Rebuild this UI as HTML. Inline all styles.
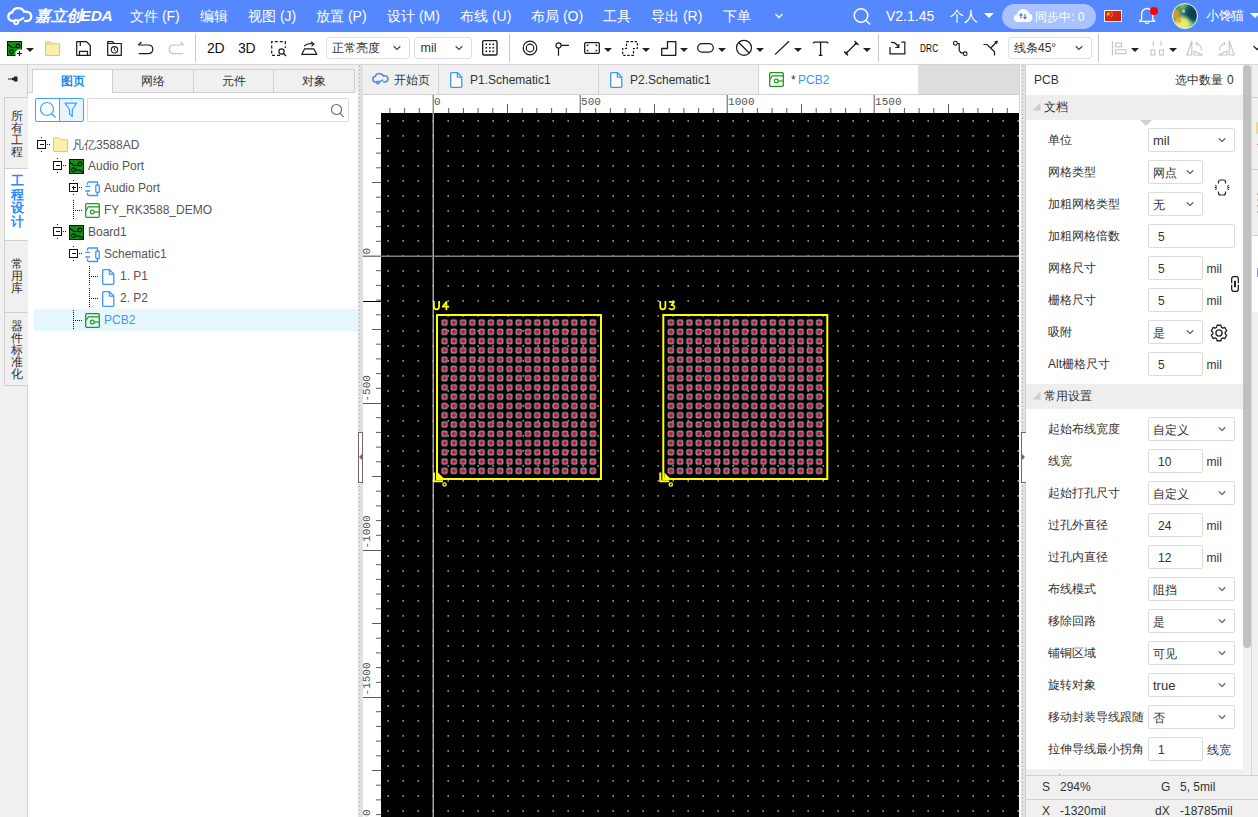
<!DOCTYPE html><html lang="zh"><head><meta charset="utf-8"><title>EDA</title><style>
*{box-sizing:border-box}
html,body{margin:0;padding:0;overflow:hidden}
html{width:1258px;height:817px}
body{width:1258px;height:817px;position:relative;overflow:hidden;background:#fff;font-family:"Liberation Sans",sans-serif;font-size:12px;color:#333}
.a{position:absolute}
i{display:inline-block;width:1em;text-align:center;font-style:inherit;overflow:visible;white-space:nowrap}
.t{position:absolute;white-space:nowrap;line-height:1}
svg{position:absolute;overflow:visible}
#top{left:0;top:0;width:1258px;height:32px;background:#5588ff}
#top .t{color:#fff;font-size:14px;top:9px}
#tb{left:0;top:32px;width:1258px;height:32px;background:#fff}
.sep{position:absolute;top:34px;width:1px;height:28px;background:#c8c8c8}
.dd{position:absolute;top:37px;height:22px;border:1px solid #dcdfe6;border-radius:3px;background:#fff}
.dd .t{font-size:13px;top:4px;color:#333}
.arr{position:absolute;width:0;height:0;border-left:4px solid transparent;border-right:4px solid transparent;border-top:4px solid #222;top:48px}
.row .t{font-size:12px;color:#333}
.inp{position:absolute;height:24px;border:1px solid #dcdcdc;border-radius:2px;background:#fff}
.inp .t{font-size:13px;top:5px;color:#333}
.lbl{position:absolute;white-space:nowrap;line-height:1;font-size:12px;color:#333;left:1048px}
.unit{position:absolute;white-space:nowrap;line-height:1;font-size:13px;color:#333}
.tr{position:absolute;white-space:nowrap;line-height:1;font-size:12px;color:#444}
.vt{position:absolute;left:4px;width:24px;border:1px solid #d0d0d0;border-right:none;background:#f0f0f0;font-size:12px;line-height:12px;text-align:center;color:#333}
.vt span{display:block;width:12px;margin:0 auto;word-break:break-all}
</style></head><body>
<div id="top" class="a">
<svg style="left:6.500px;top:6.500px" width="27.500" height="19" viewBox="0 0 26 18"><path d="M7.5 13.2H5.6C3 13.2 1.2 11.4 1.2 9.2c0-2 1.5-3.7 3.6-4C5.6 2.7 7.9 1 10.6 1c2.5 0 4.600 1.400 5.600 3.500 0.500-0.100 1-0.200 1.500-0.200 3 0 5.300 2.100 5.300 4.700 0 2.500-2.100 4.400-4.800 4.400h-1.200" fill="none" stroke="#fff" stroke-width="2.2" stroke-linecap="round"/><path d="M10 13.500 L15.500 10.500" stroke="#fff" stroke-width="2" stroke-linecap="round"/><circle cx="8.600" cy="14.200" r="2" fill="none" stroke="#fff" stroke-width="1.800"/></svg>
<div class="t" style="left:35px;top:8px;font-size:15.500px;font-weight:bold;font-style:italic;letter-spacing:-0.3px"><i>嘉</i><i>立</i><i>创</i></div>
<div class="t" style="left:80.600px;top:8px;font-size:15.500px;font-weight:bold;font-style:italic;letter-spacing:-0.3px">EDA</div>
<div class="t" style="left:130px"><i>文</i><i>件</i> (F)</div>
<div class="t" style="left:200px"><i>编</i><i>辑</i></div>
<div class="t" style="left:248px"><i>视</i><i>图</i> (J)</div>
<div class="t" style="left:316px"><i>放</i><i>置</i> (P)</div>
<div class="t" style="left:387px"><i>设</i><i>计</i> (M)</div>
<div class="t" style="left:460px"><i>布</i><i>线</i> (U)</div>
<div class="t" style="left:531px"><i>布</i><i>局</i> (O)</div>
<div class="t" style="left:603px"><i>工</i><i>具</i></div>
<div class="t" style="left:651px"><i>导</i><i>出</i> (R)</div>
<div class="t" style="left:723px"><i>下</i><i>单</i></div>
<svg style="left:774px;top:12px" width="10" height="8" viewBox="0 0 10 8"><path d="M1.500 2 L5 5.500 L8.500 2" fill="none" stroke="#fff" stroke-width="1.300"/></svg>
<svg style="left:852px;top:6px" width="20" height="20" viewBox="0 0 20 20"><circle cx="9" cy="9.500" r="6.800" fill="none" stroke="#fff" stroke-width="1.500"/><path d="M14 14.500 L17.800 18" stroke="#fff" stroke-width="1.500" stroke-linecap="round"/></svg>
<div class="t" style="left:886px">V2.1.45</div>
<div class="t" style="left:950px"><i>个</i><i>人</i></div>
<div class="a" style="left:984px;top:13px;width:0;height:0;border-left:5px solid transparent;border-right:5px solid transparent;border-top:5px solid #fff"></div>
<div class="a" style="left:1002px;top:4px;width:94px;height:25px;border-radius:13px;background:#a9c3ff"></div>
<svg style="left:1013px;top:8px" width="20" height="15" viewBox="0 0 20 15"><path d="M5 14C2.500 14 0.800 12.300 0.800 10.200 0.800 8.300 2.200 6.800 4 6.500 4.500 3.500 7 1 10.200 1c2.800 0 5 1.700 5.800 4.200 2 0.300 3.400 2 3.400 4.200 0 2.500-2 4.600-4.500 4.600z" fill="#fff"/><path d="M8 10.500V6M6.500 7.500L8 5.800 9.500 7.500M12 6v4.500M10.500 9L12 10.700 13.500 9" stroke="#3b6fe0" stroke-width="1.100" fill="none"/></svg>
<div class="t" style="left:1035px;top:11px;font-size:12px"><i>同</i><i>步</i><i>中</i>: 0</div>
<div class="a" style="left:1104px;top:10px;width:18px;height:12px;background:linear-gradient(135deg,#e0301a,#c81d10);border:1px solid #f4efe6"></div>
<svg style="left:1105px;top:11px" width="16" height="10" viewBox="0 0 16 10"><path d="M3.30 1.00L3.83 2.47L5.39 2.52L4.16 3.48L4.59 4.98L3.30 4.10L2.01 4.98L2.44 3.48L1.21 2.52L2.77 2.47z" fill="#ffde00"/><circle cx="6.300" cy="1.200" r="0.500" fill="#ffde00"/><circle cx="7.300" cy="2.600" r="0.500" fill="#ffde00"/><circle cx="7.300" cy="4.300" r="0.500" fill="#ffde00"/><circle cx="6.300" cy="5.600" r="0.500" fill="#ffde00"/></svg>
<svg style="left:1138px;top:7px" width="19" height="19" viewBox="0 0 19 19"><path d="M1.500 14.300L3.600 12.300V7Q3.600 2.300 9 1.300Q14.700 2.300 14.700 7V12.300L16.800 14.300z" fill="none" stroke="#fff" stroke-width="1.300" stroke-linejoin="round"/><path d="M7.200 14.800Q7.200 16.600 9 16.600Q10.800 16.600 10.800 14.800" fill="none" stroke="#fff" stroke-width="1.200"/></svg>
<div class="a" style="left:1150px;top:7px;width:8px;height:8px;border-radius:4px;background:#f00"></div>
<div class="a" style="left:1172px;top:3px;width:26px;height:26px;border-radius:13px;border:1px solid #f2f6ff;background:radial-gradient(circle at 44% 30%,#b9c9cf 0,#b9c9cf 4%,rgba(185,201,207,0) 10%),radial-gradient(circle at 24% 68%,#f2a93a 0,#f2a93a 6%,rgba(242,169,58,0) 14%),radial-gradient(circle at 8% 42%,#c9a02e 0,#c9a02e 12%,rgba(201,160,46,0) 30%),radial-gradient(circle at 38% 88%,#e9ec6c 0,#e4e866 22%,rgba(228,232,102,0) 42%),radial-gradient(circle at 86% 38%,#0b3b4c 0,#0e4857 22%,rgba(14,72,87,0) 42%),radial-gradient(circle at 78% 82%,#5cb392 0,rgba(92,179,146,0) 32%),radial-gradient(circle at 38% 6%,#a3bd3c 0,rgba(163,189,60,0) 24%),#1f8577"></div>
<div class="t" style="left:1206px;top:10px;font-size:12.500px"><i>小</i><i>馋</i><i>猫</i></div>
<div class="a" style="left:1250px;top:13px;width:0;height:0;border-left:5px solid transparent;border-right:5px solid transparent;border-top:5px solid #fff"></div>
</div>
<div id="tb" class="a"></div>
<div class="a" style="left:0;top:64px;width:1258px;height:1px;background:#d6d6d6"></div>
<svg style="left:7px;top:41px" width="16" height="16" viewBox="0 0 16 16"><rect x="0.5" y="0.5" width="14" height="14" fill="#0f8f10" stroke="#111" stroke-width="1"/><path d="M1 3.500 L5 6.500 H9" fill="none" stroke="#111" stroke-width="1.100"/><circle cx="11" cy="5" r="1.900" fill="none" stroke="#111" stroke-width="1.100"/><circle cx="4.500" cy="10.800" r="1.900" fill="none" stroke="#111" stroke-width="1.100"/><path d="M8.500 15 V11 L11 8.500 H15 V15z" fill="#fff"/><path d="M10 12.500h5M12.500 10v5" stroke="#111" stroke-width="1.200"/></svg>
<div class="arr" style="left:26px"></div>
<svg style="left:45px;top:41px" width="16" height="16" viewBox="0 0 16 16"><path d="M0.600 14.400V0.800H5.500L7.500 2.800H14.600V14.400z" fill="#fbf0a9" stroke="#dcc565" stroke-width="1"/><path d="M7.500 2.800H0.800" stroke="#dcc565" stroke-width="0.800" fill="none"/></svg>
<svg style="left:76px;top:41px" width="16" height="16" viewBox="0 0 16 16"><path d="M0.700 14.300V0.700H10.500L14.300 4.500V14.300z" fill="none" stroke="#1a1a1a" stroke-width="1.200" stroke-linejoin="round"/><path d="M3.500 14V10.300H11.500V14" fill="none" stroke="#1a1a1a" stroke-width="1.200"/><path d="M4.300 1V5" stroke="#1a1a1a" stroke-width="1.200"/></svg>
<svg style="left:107px;top:41px" width="16" height="16" viewBox="0 0 16 16"><path d="M0.700 14.300V0.700H5.500L7 2.500H14.300V14.300z" fill="none" stroke="#1a1a1a" stroke-width="1.200" stroke-linejoin="round"/><path d="M7 2.500 H1" stroke="#1a1a1a" stroke-width="0.900"/><circle cx="7.500" cy="8.800" r="3.200" fill="none" stroke="#1a1a1a" stroke-width="1.100"/><path d="M7.500 6.800V8.800L9 10.300" fill="none" stroke="#1a1a1a" stroke-width="1"/></svg>
<svg style="left:137px;top:40px" width="18" height="16" viewBox="0 0 18 16"><path d="M1.500 5 H11 C14.200 5 15.800 7 15.800 9.300 C15.800 11.600 14.200 13.700 11 13.700 H1.800" fill="none" stroke="#1a1a1a" stroke-width="1.200"/><path d="M4.500 2 L1.300 5" fill="none" stroke="#1a1a1a" stroke-width="1.200"/></svg>
<svg style="left:167px;top:40px" width="18" height="16" viewBox="0 0 18 16"><path d="M16.500 5 H7 C3.800 5 2.200 7 2.200 9.300 C2.200 11.600 3.800 13.700 7 13.700 H16.200" fill="none" stroke="#c4c4c4" stroke-width="1.200"/><path d="M13.500 2 L16.700 5" fill="none" stroke="#c4c4c4" stroke-width="1.200"/></svg>
<div class="sep" style="left:195px"></div>
<div class="t" style="left:207px;top:41px;font-size:14px;color:#111;letter-spacing:-0.3px">2D</div>
<div class="t" style="left:238px;top:41px;font-size:14px;color:#111;letter-spacing:-0.3px">3D</div>
<svg style="left:271px;top:41px" width="16" height="16" viewBox="0 0 16 16"><path d="M9 14.300H0.700V0.700H14.300V7" fill="none" stroke="#1a1a1a" stroke-width="1.200" stroke-dasharray="3 2"/><circle cx="10.500" cy="10.500" r="2.600" fill="none" stroke="#1a1a1a" stroke-width="1.200"/><path d="M12.500 12.500L15 15" stroke="#1a1a1a" stroke-width="1.200"/></svg>
<svg style="left:301px;top:41px" width="17" height="16" viewBox="0 0 17 16"><path d="M0.800 13.300L3.600 7.800H12.800L15.800 13.300z" fill="none" stroke="#1a1a1a" stroke-width="1.200" stroke-linejoin="round"/><path d="M3.200 5.200C5.500 2.800 9 2.200 12.500 3" fill="none" stroke="#1a1a1a" stroke-width="1.200"/><path d="M10 0.800L13 3L10.500 5.300" fill="none" stroke="#1a1a1a" stroke-width="1.100"/></svg>
<div class="dd" style="left:326px;width:84px"><div class="t" style="left:5px;top:4px;font-size:12px"><i>正</i><i>常</i><i>亮</i><i>度</i></div></div>
<svg style="left:392px;top:44px" width="10" height="8" viewBox="0 0 10 8"><path d="M1.700 2.300L5 5.400L8.300 2.300" fill="none" stroke="#444" stroke-width="1.200"/></svg>
<div class="dd" style="left:414px;width:58px"><div class="t" style="left:5.500px;top:4px;font-size:12.500px">mil</div></div>
<svg style="left:454px;top:44px" width="10" height="8" viewBox="0 0 10 8"><path d="M1.700 2.300L5 5.400L8.300 2.300" fill="none" stroke="#444" stroke-width="1.200"/></svg>
<svg style="left:482px;top:40px" width="16" height="16" viewBox="0 0 16 16"><rect x="0.700" y="0.700" width="14.300" height="14.300" rx="1" fill="none" stroke="#1a1a1a" stroke-width="1.300"/><rect x="3.5" y="3.5" width="1.600" height="1.600" fill="#1a1a1a"/><rect x="3.5" y="7" width="1.600" height="1.600" fill="#1a1a1a"/><rect x="3.5" y="10.5" width="1.600" height="1.600" fill="#1a1a1a"/><rect x="7" y="3.5" width="1.600" height="1.600" fill="#1a1a1a"/><rect x="7" y="7" width="1.600" height="1.600" fill="#1a1a1a"/><rect x="7" y="10.5" width="1.600" height="1.600" fill="#1a1a1a"/><rect x="10.5" y="3.5" width="1.600" height="1.600" fill="#1a1a1a"/><rect x="10.5" y="7" width="1.600" height="1.600" fill="#1a1a1a"/><rect x="10.5" y="10.5" width="1.600" height="1.600" fill="#1a1a1a"/></svg>
<div class="sep" style="left:509px"></div>
<svg style="left:522px;top:40px" width="16" height="16" viewBox="0 0 16 16"><circle cx="8" cy="8" r="6.800" fill="none" stroke="#1a1a1a" stroke-width="1.200"/><circle cx="8" cy="8" r="3.800" fill="none" stroke="#1a1a1a" stroke-width="1.200"/></svg>
<svg style="left:554px;top:41px" width="16" height="16" viewBox="0 0 16 16"><circle cx="4.500" cy="4.400" r="2.600" fill="none" stroke="#1a1a1a" stroke-width="1.200"/><path d="M7.200 4.400H15M4.500 7V14.800" stroke="#1a1a1a" stroke-width="1.200"/></svg>
<svg style="left:584px;top:42px" width="16" height="12" viewBox="0 0 16 12"><rect x="0.700" y="0.700" width="14.600" height="10.600" rx="1" fill="none" stroke="#1a1a1a" stroke-width="1.300"/><rect x="2.800" y="2.500" width="1.600" height="1.600" fill="#1a1a1a"/><rect x="11.600" y="2.500" width="1.600" height="1.600" fill="#1a1a1a"/><rect x="2.800" y="7.800" width="1.600" height="1.600" fill="#1a1a1a"/><rect x="11.600" y="7.800" width="1.600" height="1.600" fill="#1a1a1a"/></svg>
<div class="arr" style="left:604px"></div>
<svg style="left:622px;top:41px" width="17" height="15" viewBox="0 0 17 15"><path d="M4.500 0.700H15.300V7.500H11.500V14.300H0.700V7.500H4.500z" fill="none" stroke="#1a1a1a" stroke-width="1.200" stroke-dasharray="2.500 1.500"/></svg>
<div class="arr" style="left:642px"></div>
<svg style="left:661px;top:41px" width="16" height="15" viewBox="0 0 16 15"><path d="M6.500 0.700H14.800V14.300H0.700V7.500H6.500z" fill="none" stroke="#1a1a1a" stroke-width="1.300" stroke-linejoin="round"/></svg>
<div class="arr" style="left:680px"></div>
<svg style="left:697px;top:43px" width="18" height="10" viewBox="0 0 18 10"><rect x="0.700" y="0.700" width="15.600" height="8.400" rx="4.200" fill="none" stroke="#1a1a1a" stroke-width="1.200"/></svg>
<div class="arr" style="left:718px"></div>
<svg style="left:735px;top:39px" width="18" height="18" viewBox="0 0 18 18"><circle cx="9" cy="8.800" r="7.500" fill="none" stroke="#1a1a1a" stroke-width="1.200"/><path d="M3.800 3.500L14.200 14" stroke="#1a1a1a" stroke-width="1.200"/></svg>
<div class="arr" style="left:756px"></div>
<svg style="left:774px;top:40px" width="16" height="16" viewBox="0 0 16 16"><path d="M1 14.600L15 1.200" stroke="#1a1a1a" stroke-width="1.300"/></svg>
<div class="arr" style="left:794px"></div>
<svg style="left:813px;top:41px" width="16" height="16" viewBox="0 0 16 16"><path d="M0.500 1.200H14.700M7.600 1.200V14.300M5.800 14.300H9.400M0.500 1.200V2.500M14.700 1.200V2.500" stroke="#1a1a1a" stroke-width="1.300" fill="none"/></svg>
<svg style="left:843px;top:40px" width="18" height="17" viewBox="0 0 18 17"><path d="M2.500 14L14 2.500" stroke="#1a1a1a" stroke-width="1.300"/><path d="M1 11.500L5 15.500M11.500 1L15.500 5" stroke="#1a1a1a" stroke-width="1.200"/><path d="M2.500 14L3.200 11.200L5.300 13.300zM14 2.500L13.300 5.300L11.200 3.200z" fill="#1a1a1a"/></svg>
<div class="arr" style="left:863px"></div>
<div class="sep" style="left:878px"></div>
<svg style="left:889px;top:41px" width="18" height="14" viewBox="0 0 18 14"><path d="M1 6V12.800H15.800V1.200H12.500" fill="none" stroke="#1a1a1a" stroke-width="1.200"/><path d="M2 1.500C5.500 1.200 8 3 9.500 6.500" fill="none" stroke="#1a1a1a" stroke-width="1.200"/><path d="M6.300 6.500H9.800V3" fill="none" stroke="#1a1a1a" stroke-width="1.200"/></svg>
<div class="t" style="left:920px;top:43px;font-size:11.500px;color:#000;transform:scaleX(0.72);transform-origin:0 0;letter-spacing:0.2px">DRC</div>
<svg style="left:952px;top:40px" width="17" height="17" viewBox="0 0 17 17"><circle cx="3.400" cy="3.200" r="1.900" fill="none" stroke="#1a1a1a" stroke-width="1.100"/><circle cx="13.200" cy="13.800" r="1.900" fill="none" stroke="#1a1a1a" stroke-width="1.100"/><path d="M5.300 3.500H7.200V10.500L9 12.800H11.300" fill="none" stroke="#1a1a1a" stroke-width="1.200"/></svg>
<svg style="left:982px;top:39px" width="18" height="18" viewBox="0 0 18 18"><path d="M1.500 5.500H5L12.500 12.800V16.500" fill="none" stroke="#1a1a1a" stroke-width="1.200"/><path d="M8.800 9L15 2.500" fill="none" stroke="#1a1a1a" stroke-width="1.200"/><path d="M16 1.500L12.200 2.500L15 5.300z" fill="#1a1a1a"/></svg>
<div class="dd" style="left:1008px;width:84px"><div class="t" style="left:5px;top:4px;font-size:12px"><i>线</i><i>条</i>45°</div></div>
<svg style="left:1074px;top:44px" width="10" height="8" viewBox="0 0 10 8"><path d="M1.700 2.300L5 5.400L8.300 2.300" fill="none" stroke="#444" stroke-width="1.200"/></svg>
<div class="sep" style="left:1098px"></div>
<svg style="left:1111px;top:41px" width="17" height="15" viewBox="0 0 17 15"><path d="M1.500 0V14.500" stroke="#c4c4c4" stroke-width="1.200"/><rect x="4.500" y="2" width="6" height="3.800" fill="none" stroke="#c4c4c4" stroke-width="1.100"/><rect x="4.500" y="8.800" width="10.500" height="3.800" fill="none" stroke="#c4c4c4" stroke-width="1.100"/></svg>
<div class="arr" style="left:1131px"></div>
<svg style="left:1150px;top:41px" width="15" height="15" viewBox="0 0 15 15"><path d="M3.200 0V5M11 0V5" stroke="#c4c4c4" stroke-width="1.100"/><rect x="1" y="8.800" width="3.800" height="5.200" fill="none" stroke="#c4c4c4" stroke-width="1.100"/><rect x="9.500" y="8.800" width="3.800" height="5.200" fill="none" stroke="#c4c4c4" stroke-width="1.100"/></svg>
<div class="arr" style="left:1169px"></div>
<svg style="left:1186px;top:40px" width="18" height="16" viewBox="0 0 18 16"><path d="M5.800 1L0.800 15H5.800z" fill="none" stroke="#c4c4c4" stroke-width="1.100" stroke-linejoin="round"/><path d="M8 15H16.500L8 11z" fill="none" stroke="#c4c4c4" stroke-width="1.100" stroke-linejoin="round"/><path d="M15.500 10C15.500 6.500 13 4 10 3.500" fill="none" stroke="#c4c4c4" stroke-width="1.100"/><path d="M11.500 1.800L9.500 3.500L11.500 5.500" fill="none" stroke="#c4c4c4" stroke-width="1"/></svg>
<svg style="left:1217px;top:40px" width="18" height="16" viewBox="0 0 18 16"><path d="M12.200 1L17.200 15H12.200z" fill="none" stroke="#c4c4c4" stroke-width="1.100" stroke-linejoin="round"/><path d="M10 15H1.500L10 11z" fill="none" stroke="#c4c4c4" stroke-width="1.100" stroke-linejoin="round"/><path d="M2.500 10C2.500 6.500 5 4 8 3.500" fill="none" stroke="#c4c4c4" stroke-width="1.100"/><path d="M6.500 1.800L8.500 3.500L6.500 5.500" fill="none" stroke="#c4c4c4" stroke-width="1"/></svg>
<svg style="left:1252px;top:44px" width="10" height="8" viewBox="0 0 10 8"><path d="M1.500 2 L5 5.500 L8.500 2" fill="none" stroke="#222" stroke-width="1.300"/></svg>
<div class="a" style="left:0;top:65px;width:358px;height:752px;background:#f0f0f0"></div>
<div class="a" style="left:28px;top:92px;width:330px;height:725px;background:#fff"></div>
<div class="a" style="left:27px;top:65px;width:1px;height:752px;background:#d0d0d0"></div>
<svg style="left:8px;top:75px" width="11" height="8" viewBox="0 0 11 8"><path d="M0 4H4" stroke="#222" stroke-width="1"/><path d="M4 2.800H6V1.500H9.500V6.500H6V5.200H4z" fill="#222"/></svg>
<div class="vt" style="top:97px;height:72px;padding-top:12px;font-size:12px;line-height:12px;"><span><i>所</i></span><span><i>有</i></span><span><i>工</i></span><span><i>程</i></span></div>
<div class="vt" style="top:168px;height:73px;padding-top:5px;background:#fff;color:#2f8af5;font-weight:bold;width:24px;border-right:none;font-size:13px;line-height:13.5px;"><span><i>工</i></span><span><i>程</i></span><span><i>设</i></span><span><i>计</i></span></div>
<div class="vt" style="top:240px;height:73px;padding-top:17px;font-size:12px;line-height:12px;"><span><i>常</i></span><span><i>用</i></span><span><i>库</i></span></div>
<div class="vt" style="top:312px;height:74px;padding-top:7px;font-size:12px;line-height:12px;"><span><i>器</i></span><span><i>件</i></span><span><i>标</i></span><span><i>准</i></span><span><i>化</i></span></div>
<div class="a" style="left:27px;top:169px;width:1px;height:71px;background:#fff"></div>
<div class="a" style="left:32px;top:69px;width:81px;height:24px;background:#fff;border:1px solid #d0d0d0;border-bottom:none"></div>
<div class="t" style="left:32px;top:75px;width:81px;text-align:center;color:#1e88f5;font-size:12px;font-weight:bold"><i>图</i><i>页</i></div>
<div class="a" style="left:112px;top:69px;width:82px;height:24px;background:#f0f0f0;border:1px solid #d0d0d0"></div>
<div class="t" style="left:112px;top:75px;width:81px;text-align:center;color:#333;font-size:12px"><i>网</i><i>络</i></div>
<div class="a" style="left:193px;top:69px;width:82px;height:24px;background:#f0f0f0;border:1px solid #d0d0d0"></div>
<div class="t" style="left:193px;top:75px;width:81px;text-align:center;color:#333;font-size:12px"><i>元</i><i>件</i></div>
<div class="a" style="left:273px;top:69px;width:82px;height:24px;background:#f0f0f0;border:1px solid #d0d0d0"></div>
<div class="t" style="left:273px;top:75px;width:81px;text-align:center;color:#333;font-size:12px"><i>对</i><i>象</i></div>
<div class="a" style="left:28px;top:92px;width:5px;height:1px;background:#d0d0d0"></div>
<div class="a" style="left:35px;top:98px;width:25px;height:24px;border:1px solid #409eff;border-radius:2px 0 0 2px;background:#fff"></div>
<div class="a" style="left:59px;top:98px;width:25px;height:24px;border:1px solid #409eff;border-radius:0 2px 2px 0;background:#e6f5ff"></div>
<svg style="left:39px;top:101px" width="18" height="18" viewBox="0 0 18 18"><circle cx="8" cy="8" r="6.500" fill="none" stroke="#409eff" stroke-width="1.200"/><path d="M12.500 12.500L16.500 16.500" stroke="#409eff" stroke-width="1.200"/></svg>
<svg style="left:64px;top:102px" width="14" height="16" viewBox="0 0 14 16"><path d="M1 1.200H12.500L8.300 7.500V14.500L5.500 12V7.500z" fill="none" stroke="#409eff" stroke-width="1.200" stroke-linejoin="round"/></svg>
<div class="a" style="left:87px;top:98px;width:262px;height:24px;border:1px solid #dcdcdc;border-radius:2px;background:#fff"></div>
<svg style="left:330px;top:103px" width="15" height="15" viewBox="0 0 15 15"><circle cx="6.500" cy="6.500" r="5" fill="none" stroke="#666" stroke-width="1.100"/><path d="M10 10.200L13.500 13.800" stroke="#666" stroke-width="1.100"/></svg>
<div class="a" style="left:34px;top:309px;width:324px;height:22px;background:#e6f7ff"></div>
<svg style="left:36px;top:136px" width="16" height="18" viewBox="0 0 16 18" shape-rendering="crispEdges"><rect x="1.500" y="4.500" width="8" height="8" fill="#fff" stroke="#111" stroke-width="1"/><path d="M3.500 8.500H7.500" stroke="#111" stroke-width="1"/><rect x="5" y="1" width="1" height="1" fill="#111"/><rect x="5" y="15" width="1" height="1" fill="#111"/><rect x="11" y="8" width="1" height="1" fill="#111"/><rect x="13" y="8" width="1" height="1" fill="#111"/></svg>
<svg style="left:53px;top:137px" width="16" height="16" viewBox="0 0 16 16"><path d="M0.600 14.400V0.800H5.500L7.500 2.800H14.600V14.400z" fill="#fbf0a9" stroke="#dcc565" stroke-width="1"/></svg>
<div class="tr" style="left:72px;top:139px;color:#555"><i>凡</i><i>亿</i>3588AD</div>
<svg style="left:52px;top:157px" width="16" height="18" viewBox="0 0 16 18" shape-rendering="crispEdges"><rect x="1.500" y="4.500" width="8" height="8" fill="#fff" stroke="#111" stroke-width="1"/><path d="M3.500 8.500H7.500" stroke="#111" stroke-width="1"/><rect x="5" y="1" width="1" height="1" fill="#111"/><rect x="5" y="15" width="1" height="1" fill="#111"/><rect x="11" y="8" width="1" height="1" fill="#111"/><rect x="13" y="8" width="1" height="1" fill="#111"/></svg>
<svg style="left:69px;top:159px" width="16" height="16" viewBox="0 0 16 16"><rect x="0.500" y="0.500" width="14" height="14" fill="#0f8f10" stroke="#111" stroke-width="1"/><path d="M1 3.500L5 6.500H9" fill="none" stroke="#111" stroke-width="1.100"/><circle cx="11" cy="5" r="1.900" fill="none" stroke="#111" stroke-width="1.100"/><circle cx="4.500" cy="10.800" r="1.900" fill="none" stroke="#111" stroke-width="1.100"/><path d="M6.500 11H10.500L14.500 13.500" fill="none" stroke="#111" stroke-width="1.100"/></svg>
<div class="tr" style="left:88px;top:160px;color:#555">Audio Port</div>
<svg style="left:68px;top:179px" width="16" height="18" viewBox="0 0 16 18" shape-rendering="crispEdges"><rect x="1.500" y="4.500" width="8" height="8" fill="#fff" stroke="#111" stroke-width="1"/><path d="M3.500 8.500H7.500" stroke="#111" stroke-width="1"/><path d="M5.500 6.500V10.500" stroke="#111" stroke-width="1"/><rect x="5" y="1" width="1" height="1" fill="#111"/><rect x="5" y="15" width="1" height="1" fill="#111"/><rect x="11" y="8" width="1" height="1" fill="#111"/><rect x="13" y="8" width="1" height="1" fill="#111"/></svg>
<svg style="left:85px;top:181px" width="16" height="16" viewBox="0 0 16 16"><path d="M2.500 3.800V2.500C2.500 1.500 3 1 4 1H12.500V14.500H4C3 14.500 2.500 14 2.500 13V11.500" fill="none" stroke="#3d97f5" stroke-width="1.300" stroke-linejoin="round"/><rect x="10.800" y="4" width="3.500" height="7.500" rx="1" fill="#fff" stroke="#3d97f5" stroke-width="1.300"/><path d="M0.300 5.300H5M0.300 10H5" stroke="#3d97f5" stroke-width="1.300"/></svg>
<div class="tr" style="left:104px;top:182px;color:#555">Audio Port</div>
<svg style="left:73px;top:200px" width="12" height="20" viewBox="0 0 12 20" shape-rendering="crispEdges"><path d="M0.500 0V19" stroke="#111" stroke-width="1" stroke-dasharray="1 1"/><path d="M2 10.500H9" stroke="#111" stroke-width="1" stroke-dasharray="1 1"/></svg>
<svg style="left:85px;top:203px" width="16" height="16" viewBox="0 0 16 16"><rect x="0.700" y="0.700" width="13.600" height="13.600" rx="1" fill="none" stroke="#1a9c1a" stroke-width="1.300"/><path d="M1 7.500L3.300 3.800H14" fill="none" stroke="#1a9c1a" stroke-width="1.200"/><circle cx="7.300" cy="9" r="1.900" fill="none" stroke="#1a9c1a" stroke-width="1.200"/><path d="M9.200 9H14" stroke="#1a9c1a" stroke-width="1.200"/></svg>
<div class="tr" style="left:104px;top:204px;color:#555">FY_RK3588_DEMO</div>
<svg style="left:52px;top:223px" width="16" height="18" viewBox="0 0 16 18" shape-rendering="crispEdges"><rect x="1.500" y="4.500" width="8" height="8" fill="#fff" stroke="#111" stroke-width="1"/><path d="M3.500 8.500H7.500" stroke="#111" stroke-width="1"/><rect x="5" y="1" width="1" height="1" fill="#111"/><rect x="5" y="15" width="1" height="1" fill="#111"/><rect x="11" y="8" width="1" height="1" fill="#111"/><rect x="13" y="8" width="1" height="1" fill="#111"/></svg>
<svg style="left:69px;top:225px" width="16" height="16" viewBox="0 0 16 16"><rect x="0.500" y="0.500" width="14" height="14" fill="#0f8f10" stroke="#111" stroke-width="1"/><path d="M1 3.500L5 6.500H9" fill="none" stroke="#111" stroke-width="1.100"/><circle cx="11" cy="5" r="1.900" fill="none" stroke="#111" stroke-width="1.100"/><circle cx="4.500" cy="10.800" r="1.900" fill="none" stroke="#111" stroke-width="1.100"/><path d="M6.500 11H10.500L14.500 13.500" fill="none" stroke="#111" stroke-width="1.100"/></svg>
<div class="tr" style="left:88px;top:226px;color:#555">Board1</div>
<svg style="left:68px;top:245px" width="16" height="18" viewBox="0 0 16 18" shape-rendering="crispEdges"><rect x="1.500" y="4.500" width="8" height="8" fill="#fff" stroke="#111" stroke-width="1"/><path d="M3.500 8.500H7.500" stroke="#111" stroke-width="1"/><rect x="5" y="1" width="1" height="1" fill="#111"/><rect x="5" y="15" width="1" height="1" fill="#111"/><rect x="11" y="8" width="1" height="1" fill="#111"/><rect x="13" y="8" width="1" height="1" fill="#111"/></svg>
<svg style="left:85px;top:247px" width="16" height="16" viewBox="0 0 16 16"><path d="M2.500 3.800V2.500C2.500 1.500 3 1 4 1H12.500V14.500H4C3 14.500 2.500 14 2.500 13V11.500" fill="none" stroke="#3d97f5" stroke-width="1.300" stroke-linejoin="round"/><rect x="10.800" y="4" width="3.500" height="7.500" rx="1" fill="#fff" stroke="#3d97f5" stroke-width="1.300"/><path d="M0.300 5.300H5M0.300 10H5" stroke="#3d97f5" stroke-width="1.300"/></svg>
<div class="tr" style="left:104px;top:248px;color:#555">Schematic1</div>
<svg style="left:89px;top:266px" width="12" height="20" viewBox="0 0 12 20" shape-rendering="crispEdges"><path d="M0.500 0V19" stroke="#111" stroke-width="1" stroke-dasharray="1 1"/><path d="M2 10.500H9" stroke="#111" stroke-width="1" stroke-dasharray="1 1"/></svg>
<svg style="left:102px;top:269px" width="13" height="16" viewBox="0 0 13 16"><path d="M0.700 14.500V2C0.700 1.200 1.200 0.700 2 0.700H7.500L11.800 5V14.500C11.800 15 11.500 15.300 11 15.300H1.500C1 15.300 0.700 15 0.700 14.500z" fill="#fff" stroke="#3d97f5" stroke-width="1.300" stroke-linejoin="round"/><path d="M7.300 0.700V5.200H11.800" fill="none" stroke="#3d97f5" stroke-width="1.200"/></svg>
<div class="tr" style="left:120px;top:270px;color:#555">1. P1</div>
<svg style="left:89px;top:288px" width="12" height="20" viewBox="0 0 12 20" shape-rendering="crispEdges"><path d="M0.500 0V19" stroke="#111" stroke-width="1" stroke-dasharray="1 1"/><path d="M2 10.500H9" stroke="#111" stroke-width="1" stroke-dasharray="1 1"/></svg>
<svg style="left:102px;top:291px" width="13" height="16" viewBox="0 0 13 16"><path d="M0.700 14.500V2C0.700 1.200 1.200 0.700 2 0.700H7.500L11.800 5V14.500C11.800 15 11.500 15.300 11 15.300H1.500C1 15.300 0.700 15 0.700 14.500z" fill="#fff" stroke="#3d97f5" stroke-width="1.300" stroke-linejoin="round"/><path d="M7.300 0.700V5.200H11.800" fill="none" stroke="#3d97f5" stroke-width="1.200"/></svg>
<div class="tr" style="left:120px;top:292px;color:#555">2. P2</div>
<svg style="left:73px;top:310px" width="12" height="20" viewBox="0 0 12 20" shape-rendering="crispEdges"><path d="M0.500 0V19" stroke="#111" stroke-width="1" stroke-dasharray="1 1"/><path d="M2 10.500H9" stroke="#111" stroke-width="1" stroke-dasharray="1 1"/></svg>
<svg style="left:85px;top:313px" width="16" height="16" viewBox="0 0 16 16"><rect x="0.700" y="0.700" width="13.600" height="13.600" rx="1" fill="none" stroke="#1a9c1a" stroke-width="1.300"/><path d="M1 7.500L3.300 3.800H14" fill="none" stroke="#1a9c1a" stroke-width="1.200"/><circle cx="7.300" cy="9" r="1.900" fill="none" stroke="#1a9c1a" stroke-width="1.200"/><path d="M9.200 9H14" stroke="#1a9c1a" stroke-width="1.200"/></svg>
<div class="tr" style="left:104px;top:314px;color:#3d97f5">PCB2</div>
<div class="a" style="left:358px;top:65px;width:5px;height:752px;background:#e0e0e0"></div>
<div class="a" style="left:359px;top:66px;width:1px;height:751px;background:repeating-linear-gradient(180deg,#9c9c9c 0,#9c9c9c 1px,#fff 1px,#fff 2px,rgba(0,0,0,0) 2px,rgba(0,0,0,0) 4px)"></div>
<div class="a" style="left:358px;top:432px;width:5px;height:51px;border:1px solid #7a6464;background:#fff"></div>
<div class="a" style="left:359px;top:454px;width:0;height:0;border-top:3px solid transparent;border-bottom:3px solid transparent;border-right:3px solid #7a6464"></div>
<div class="a" style="left:363px;top:65px;width:656px;height:29px;background:#f0f0f0"></div>
<div class="a" style="left:918px;top:65px;width:101px;height:29px;background:#dddddd"></div>
<div class="a" style="left:758px;top:65px;width:160px;height:29px;background:#fff"></div>
<div class="a" style="left:363px;top:94px;width:656px;height:1px;background:#d0d0d0"></div>
<div class="a" style="left:438px;top:65px;width:1px;height:29px;background:#d4d4d4"></div>
<div class="a" style="left:598px;top:65px;width:1px;height:29px;background:#d4d4d4"></div>
<div class="a" style="left:758px;top:65px;width:1px;height:29px;background:#d4d4d4"></div>
<svg style="left:372px;top:72px" width="18" height="14" viewBox="0 0 26 18"><path d="M7.500 13.200H5.600C3 13.200 1.200 11.400 1.200 9.200c0-2 1.500-3.700 3.600-4C5.600 2.700 7.900 1 10.600 1c2.500 0 4.600 1.400 5.600 3.500 0.500-0.100 1-0.200 1.500-0.200 3 0 5.300 2.100 5.300 4.700 0 2.500-2.100 4.400-4.800 4.400h-1.200" fill="none" stroke="#4a86f5" stroke-width="2.200" stroke-linecap="round"/><path d="M10 13.500L15.500 10.500" stroke="#4a86f5" stroke-width="2" stroke-linecap="round"/><circle cx="8.600" cy="14.200" r="2" fill="none" stroke="#4a86f5" stroke-width="1.800"/></svg>
<div class="t" style="left:394px;top:74px;font-size:12px;color:#333"><i>开</i><i>始</i><i>页</i></div>
<svg style="left:450px;top:72px" width="13" height="16" viewBox="0 0 13 16"><path d="M0.700 14.500V2C0.700 1.200 1.200 0.700 2 0.700H7.500L11.800 5V14.500C11.800 15 11.500 15.300 11 15.300H1.500C1 15.300 0.700 15 0.700 14.500z" fill="#fff" stroke="#3d97f5" stroke-width="1.300" stroke-linejoin="round"/><path d="M7.300 0.700V5.200H11.800" fill="none" stroke="#3d97f5" stroke-width="1.200"/></svg>
<div class="t" style="left:470px;top:74px;font-size:12px;color:#333">P1.Schematic1</div>
<svg style="left:610px;top:72px" width="13" height="16" viewBox="0 0 13 16"><path d="M0.700 14.500V2C0.700 1.200 1.200 0.700 2 0.700H7.500L11.800 5V14.500C11.800 15 11.500 15.300 11 15.300H1.500C1 15.300 0.700 15 0.700 14.500z" fill="#fff" stroke="#3d97f5" stroke-width="1.300" stroke-linejoin="round"/><path d="M7.300 0.700V5.200H11.800" fill="none" stroke="#3d97f5" stroke-width="1.200"/></svg>
<div class="t" style="left:630px;top:74px;font-size:12px;color:#333">P2.Schematic1</div>
<svg style="left:769px;top:72px" width="16" height="16" viewBox="0 0 16 16"><rect x="0.700" y="0.700" width="13.600" height="13.600" rx="1" fill="none" stroke="#1a9c1a" stroke-width="1.300"/><path d="M1 7.500L3.300 3.800H14" fill="none" stroke="#1a9c1a" stroke-width="1.200"/><circle cx="7.300" cy="9" r="1.900" fill="none" stroke="#1a9c1a" stroke-width="1.200"/><path d="M9.200 9H14" stroke="#1a9c1a" stroke-width="1.200"/></svg>
<div class="t" style="left:791px;top:74px;font-size:12px;color:#333">*</div>
<div class="t" style="left:798px;top:74px;font-size:12px;color:#3d97f5">PCB2</div>
<svg style="left:363px;top:95px" width="656" height="722" viewBox="363 95 656 722"><defs><pattern id="gd" patternUnits="userSpaceOnUse" x="431" y="119" width="15" height="15"><rect x="1" y="1" width="1" height="1" fill="#545454"/><rect x="2" y="1" width="1" height="1" fill="#909090"/><rect x="1" y="2" width="1" height="1" fill="#424242"/><rect x="2" y="2" width="1" height="1" fill="#707070"/></pattern><pattern id="pd" patternUnits="userSpaceOnUse" x="0" y="0" width="9.27" height="9.27"><rect x="1.4349999999999996" y="1.4349999999999996" width="6.400" height="6.400" rx="1.800" fill="#939593"/><circle cx="4.635" cy="4.635" r="2.300" fill="#8548a8"/><circle cx="4.635" cy="4.635" r="1.700" fill="#ff0000"/></pattern></defs><rect x="363" y="95" width="656" height="722" fill="#fff"/><rect x="381" y="113" width="638" height="704" fill="#000"/><rect x="381" y="113" width="638" height="704" fill="url(#gd)"/><path d="M389.9 108V113M404.6 108V113M419.3 108V113M433.2 95V113M448.7 108V113M463.4 108V113M478.1 108V113M492.8 108V113M507.5 104V113M522.2 108V113M536.9 108V113M551.6 108V113M566.3 108V113M580.2 95V113M595.7 108V113M610.4 108V113M625.1 108V113M639.8 108V113M654.5 104V113M669.2 108V113M683.9 108V113M698.6 108V113M713.3 108V113M727.2 95V113M742.7 108V113M757.4 108V113M772.1 108V113M786.8 108V113M801.5 104V113M816.2 108V113M830.9 108V113M845.6 108V113M860.3 108V113M874.2 95V113M889.7 108V113M904.4 108V113M919.1 108V113M933.8 108V113M948.5 104V113M963.2 108V113M977.9 108V113M992.6 108V113M1007.3 108V113" stroke="#5a5a5a" stroke-width="1" fill="none"/><path d="M376 123.7H381M376 138.4H381M376 153.1H381M376 167.8H381M372 182.5H381M376 197.2H381M376 211.9H381M376 226.6H381M376 241.3H381M363 256.5H381M376 270.7H381M376 285.4H381M376 300.1H381M376 314.8H381M372 329.5H381M376 344.2H381M376 358.9H381M376 373.6H381M376 388.3H381M363 403.5H381M376 417.7H381M376 432.4H381M376 447.1H381M376 461.8H381M372 476.5H381M376 491.2H381M376 505.9H381M376 520.6H381M376 535.3H381M363 550.5H381M376 564.7H381M376 579.4H381M376 594.1H381M376 608.8H381M372 623.5H381M376 638.2H381M376 652.9H381M376 667.6H381M376 682.3H381M363 697.5H381M376 711.7H381M376 726.4H381M376 741.1H381M376 755.8H381M372 770.5H381M376 785.2H381M376 799.9H381M376 814.6H381" stroke="#5a5a5a" stroke-width="1" fill="none"/><text x="434.1" y="104.800" font-family="Liberation Mono, monospace" font-size="11" fill="#555">0</text><text x="581.1" y="104.800" font-family="Liberation Mono, monospace" font-size="11" fill="#555">500</text><text x="728.1" y="104.800" font-family="Liberation Mono, monospace" font-size="11" fill="#555">1000</text><text x="875.1" y="104.800" font-family="Liberation Mono, monospace" font-size="11" fill="#555">1500</text><text transform="translate(369.800 254.5) rotate(-90)" font-family="Liberation Mono, monospace" font-size="11" fill="#555">0</text><text transform="translate(369.800 401.5) rotate(-90)" font-family="Liberation Mono, monospace" font-size="11" fill="#555">-500</text><text transform="translate(369.800 548.5) rotate(-90)" font-family="Liberation Mono, monospace" font-size="11" fill="#555">-1000</text><text transform="translate(369.800 695.5) rotate(-90)" font-family="Liberation Mono, monospace" font-size="11" fill="#555">-1500</text><text transform="translate(369.800 842.5) rotate(-90)" font-family="Liberation Mono, monospace" font-size="11" fill="#555">-2000</text><path d="M363 301.500H381" stroke="#000" stroke-width="1"/><path d="M433.250 113V817" stroke="#b0b0b0" stroke-width="1.400"/><path d="M363 256.200H1019" stroke="#808080" stroke-width="1.600"/><g transform="translate(0 0)"><g transform="translate(439.93 317.93)"><rect x="0" y="0" width="157.59" height="157.59" fill="url(#pd)"/></g><rect x="437" y="315" width="164" height="164" fill="none" stroke="#ffff00" stroke-width="2"/><path d="M434 472.500V481.300H443" fill="none" stroke="#ffff00" stroke-width="2"/><path d="M438 472.500L443.500 478H438z" fill="#ffff00"/><circle cx="444.500" cy="484.500" r="1.600" fill="none" stroke="#ffff00" stroke-width="1.400"/><path d="M433.900 301V306.500Q433.900 309.300 436.500 309.300Q439.100 309.300 439.100 306.500V301" fill="none" stroke="#ffff00" stroke-width="1.750"/><path d="M446.400 310.200V301.800L442.700 306.500H449" fill="none" stroke="#ffff00" stroke-width="1.750" stroke-linejoin="round"/></g><g transform="translate(226.3 0)"><g transform="translate(439.93 317.93)"><rect x="0" y="0" width="157.59" height="157.59" fill="url(#pd)"/></g><rect x="437" y="315" width="164" height="164" fill="none" stroke="#ffff00" stroke-width="2"/><path d="M434 472.500V481.300H443" fill="none" stroke="#ffff00" stroke-width="2"/><path d="M438 472.500L443.500 478H438z" fill="#ffff00"/><circle cx="444.500" cy="484.500" r="1.600" fill="none" stroke="#ffff00" stroke-width="1.400"/><path d="M433.900 301V306.500Q433.900 309.300 436.500 309.300Q439.100 309.300 439.100 306.500V301" fill="none" stroke="#ffff00" stroke-width="1.750"/><path d="M442.600 301.900H447.800L445.200 305.100Q448.200 305 448.200 307.300Q448.100 309.300 445.500 309.300Q443.600 309.300 442.600 307.900" fill="none" stroke="#ffff00" stroke-width="1.700" stroke-linejoin="round"/></g></svg>
<div class="a" style="left:1019px;top:65px;width:2px;height:752px;background:#fff"></div>
<div class="a" style="left:1019px;top:65px;width:1px;height:48px;background:#d4d4d4"></div>
<div class="a" style="left:1021px;top:65px;width:5px;height:752px;background:#e0e0e0;border-right:1px solid #d2d2d2"></div>
<div class="a" style="left:1022px;top:66px;width:1px;height:751px;background:repeating-linear-gradient(180deg,#9c9c9c 0,#9c9c9c 1px,#fff 1px,#fff 2px,rgba(0,0,0,0) 2px,rgba(0,0,0,0) 4px)"></div>
<div class="a" style="left:1021px;top:432px;width:5px;height:51px;border:1px solid #7a6464;border-right:none;background:#fff"></div>
<div class="a" style="left:1022px;top:454px;width:0;height:0;border-top:3px solid transparent;border-bottom:3px solid transparent;border-left:3px solid #7a6464"></div>
<div class="a" style="left:1026px;top:65px;width:232px;height:752px;background:#fff"></div>
<div class="t" style="left:1034px;top:74px;font-size:12px;color:#333">PCB</div>
<div class="t" style="left:1175px;top:74px;font-size:12px;color:#333"><i>选</i><i>中</i><i>数</i><i>量</i></div>
<div class="t" style="left:1227px;top:74px;font-size:12px;color:#333">0</div>
<div class="a" style="left:1026px;top:95px;width:217px;height:24.500px;background:#eeeeee"></div>
<svg style="left:1032px;top:102px" width="9" height="9" viewBox="0 0 9 9"><path d="M8.500 0.500V8.500H0.500z" fill="#ccc"/></svg>
<div class="t" style="left:1044px;top:101px;font-size:12px;color:#333"><i>文</i><i>档</i></div>
<div class="a" style="left:1140px;top:119.500px;width:0;height:0;border-left:6px solid transparent;border-right:6px solid transparent;border-top:6px solid #d0d0d0"></div>
<div class="a" style="left:1026px;top:384px;width:217px;height:24.500px;background:#eeeeee"></div>
<svg style="left:1032px;top:391px" width="9" height="9" viewBox="0 0 9 9"><path d="M8.500 0.500V8.500H0.500z" fill="#ccc"/></svg>
<div class="t" style="left:1044px;top:390px;font-size:12px;color:#333"><i>常</i><i>用</i><i>设</i><i>置</i></div>
<div class="lbl" style="top:134px"><i>单</i><i>位</i></div>
<div class="inp" style="left:1148px;top:128px;width:87px"><div class="t" style="left:4px">mil</div></div>
<svg style="left:1217px;top:136px" width="10" height="8" viewBox="0 0 10 8"><path d="M1.700 2.300L5 5.400L8.300 2.300" fill="none" stroke="#505050" stroke-width="1.100"/></svg>
<div class="lbl" style="top:166px"><i>网</i><i>格</i><i>类</i><i>型</i></div>
<div class="inp" style="left:1148px;top:160px;width:55px"><div class="t" style="left:4px;font-size:12px;top:5.500px"><i>网</i><i>点</i></div></div>
<svg style="left:1185px;top:168px" width="10" height="8" viewBox="0 0 10 8"><path d="M1.700 2.300L5 5.400L8.300 2.300" fill="none" stroke="#505050" stroke-width="1.100"/></svg>
<div class="lbl" style="top:198px"><i>加</i><i>粗</i><i>网</i><i>格</i><i>类</i><i>型</i></div>
<div class="inp" style="left:1148px;top:192px;width:55px"><div class="t" style="left:4px;font-size:12px;top:5.500px"><i>无</i></div></div>
<svg style="left:1185px;top:200px" width="10" height="8" viewBox="0 0 10 8"><path d="M1.700 2.300L5 5.400L8.300 2.300" fill="none" stroke="#505050" stroke-width="1.100"/></svg>
<div class="lbl" style="top:230px"><i>加</i><i>粗</i><i>网</i><i>格</i><i>倍</i><i>数</i></div>
<div class="inp" style="left:1148px;top:224px;width:87px"><div class="t" style="left:9px;font-size:12px;top:5.500px">5</div></div>
<div class="lbl" style="top:262px"><i>网</i><i>格</i><i>尺</i><i>寸</i></div>
<div class="inp" style="left:1148px;top:256px;width:55px"><div class="t" style="left:9px;font-size:12px;top:5.500px">5</div></div>
<div class="unit" style="left:1206.500px;top:263px;font-size:12px">mil</div>
<div class="lbl" style="top:294px"><i>栅</i><i>格</i><i>尺</i><i>寸</i></div>
<div class="inp" style="left:1148px;top:288px;width:55px"><div class="t" style="left:9px;font-size:12px;top:5.500px">5</div></div>
<div class="unit" style="left:1206.500px;top:295px;font-size:12px">mil</div>
<div class="lbl" style="top:326px"><i>吸</i><i>附</i></div>
<div class="inp" style="left:1148px;top:320px;width:55px"><div class="t" style="left:4px;font-size:12px;top:5.500px"><i>是</i></div></div>
<svg style="left:1185px;top:328px" width="10" height="8" viewBox="0 0 10 8"><path d="M1.700 2.300L5 5.400L8.300 2.300" fill="none" stroke="#505050" stroke-width="1.100"/></svg>
<div class="lbl" style="top:358px">Alt<i>栅</i><i>格</i><i>尺</i><i>寸</i></div>
<div class="inp" style="left:1148px;top:352px;width:55px"><div class="t" style="left:9px;font-size:12px;top:5.500px">5</div></div>
<div class="unit" style="left:1206.500px;top:359px;font-size:12px">mil</div>
<div class="lbl" style="top:423px"><i>起</i><i>始</i><i>布</i><i>线</i><i>宽</i><i>度</i></div>
<div class="inp" style="left:1148px;top:417px;width:87px"><div class="t" style="left:4px;font-size:12px;top:5.500px"><i>自</i><i>定</i><i>义</i></div></div>
<svg style="left:1217px;top:425px" width="10" height="8" viewBox="0 0 10 8"><path d="M1.700 2.300L5 5.400L8.300 2.300" fill="none" stroke="#505050" stroke-width="1.100"/></svg>
<div class="lbl" style="top:455px"><i>线</i><i>宽</i></div>
<div class="inp" style="left:1148px;top:449px;width:55px"><div class="t" style="left:9px;font-size:12px;top:5.500px">10</div></div>
<div class="unit" style="left:1206.500px;top:456px;font-size:12px">mil</div>
<div class="lbl" style="top:487px"><i>起</i><i>始</i><i>打</i><i>孔</i><i>尺</i><i>寸</i></div>
<div class="inp" style="left:1148px;top:481px;width:87px"><div class="t" style="left:4px;font-size:12px;top:5.500px"><i>自</i><i>定</i><i>义</i></div></div>
<svg style="left:1217px;top:489px" width="10" height="8" viewBox="0 0 10 8"><path d="M1.700 2.300L5 5.400L8.300 2.300" fill="none" stroke="#505050" stroke-width="1.100"/></svg>
<div class="lbl" style="top:519px"><i>过</i><i>孔</i><i>外</i><i>直</i><i>径</i></div>
<div class="inp" style="left:1148px;top:513px;width:55px"><div class="t" style="left:9px;font-size:12px;top:5.500px">24</div></div>
<div class="unit" style="left:1206.500px;top:520px;font-size:12px">mil</div>
<div class="lbl" style="top:551px"><i>过</i><i>孔</i><i>内</i><i>直</i><i>径</i></div>
<div class="inp" style="left:1148px;top:545px;width:55px"><div class="t" style="left:9px;font-size:12px;top:5.500px">12</div></div>
<div class="unit" style="left:1206.500px;top:552px;font-size:12px">mil</div>
<div class="lbl" style="top:583px"><i>布</i><i>线</i><i>模</i><i>式</i></div>
<div class="inp" style="left:1148px;top:577px;width:87px"><div class="t" style="left:4px;font-size:12px;top:5.500px"><i>阻</i><i>挡</i></div></div>
<svg style="left:1217px;top:585px" width="10" height="8" viewBox="0 0 10 8"><path d="M1.700 2.300L5 5.400L8.300 2.300" fill="none" stroke="#505050" stroke-width="1.100"/></svg>
<div class="lbl" style="top:615px"><i>移</i><i>除</i><i>回</i><i>路</i></div>
<div class="inp" style="left:1148px;top:609px;width:87px"><div class="t" style="left:4px;font-size:12px;top:5.500px"><i>是</i></div></div>
<svg style="left:1217px;top:617px" width="10" height="8" viewBox="0 0 10 8"><path d="M1.700 2.300L5 5.400L8.300 2.300" fill="none" stroke="#505050" stroke-width="1.100"/></svg>
<div class="lbl" style="top:647px"><i>铺</i><i>铜</i><i>区</i><i>域</i></div>
<div class="inp" style="left:1148px;top:641px;width:87px"><div class="t" style="left:4px;font-size:12px;top:5.500px"><i>可</i><i>见</i></div></div>
<svg style="left:1217px;top:649px" width="10" height="8" viewBox="0 0 10 8"><path d="M1.700 2.300L5 5.400L8.300 2.300" fill="none" stroke="#505050" stroke-width="1.100"/></svg>
<div class="lbl" style="top:679px"><i>旋</i><i>转</i><i>对</i><i>象</i></div>
<div class="inp" style="left:1148px;top:673px;width:87px"><div class="t" style="left:4px">true</div></div>
<svg style="left:1217px;top:681px" width="10" height="8" viewBox="0 0 10 8"><path d="M1.700 2.300L5 5.400L8.300 2.300" fill="none" stroke="#505050" stroke-width="1.100"/></svg>
<div class="lbl" style="top:711px"><i>移</i><i>动</i><i>封</i><i>装</i><i>导</i><i>线</i><i>跟</i><i>随</i></div>
<div class="inp" style="left:1148px;top:705px;width:87px"><div class="t" style="left:4px;font-size:12px;top:5.500px"><i>否</i></div></div>
<svg style="left:1217px;top:713px" width="10" height="8" viewBox="0 0 10 8"><path d="M1.700 2.300L5 5.400L8.300 2.300" fill="none" stroke="#505050" stroke-width="1.100"/></svg>
<div class="lbl" style="top:743px"><i>拉</i><i>伸</i><i>导</i><i>线</i><i>最</i><i>小</i><i>拐</i><i>角</i></div>
<div class="inp" style="left:1148px;top:737px;width:55px"><div class="t" style="left:9px;font-size:12px;top:5.500px">1</div></div>
<div class="unit" style="left:1206.500px;top:744px;font-size:12px;font-size:12px;top:744px"><i>线</i><i>宽</i></div>
<svg style="left:1214px;top:179px" width="16" height="17" viewBox="0 0 16 17"><path d="M4.500 4.500V3C4.500 1.800 5.300 1 6.500 1H9.500C10.700 1 11.500 1.800 11.500 3V4.500M4.500 12.500V14C4.500 15.200 5.300 16 6.500 16H9.500C10.700 16 11.500 15.200 11.500 14V12.500" fill="none" stroke="#222" stroke-width="1.200"/><path d="M1 6.500L3 7.300M1 10.500L3 9.700M15 6.500L13 7.300M15 10.500L13 9.700M0.500 8.500H2.500M13.500 8.500H15.500" stroke="#222" stroke-width="1"/></svg>
<svg style="left:1230px;top:275px" width="10" height="18" viewBox="0 0 10 18"><rect x="1.700" y="1.700" width="6.600" height="14.600" rx="2" fill="none" stroke="#111" stroke-width="1.200"/><path d="M5 5.800V12.200" stroke="#111" stroke-width="1.800"/><path d="M0.500 9H2.900M7.100 9H9.500" stroke="#fff" stroke-width="1.600"/></svg>
<svg style="left:1210px;top:323.700px" width="18" height="18" viewBox="0 0 18 18"><path d="M7.06 1.24L10.94 1.24L11.32 3.25L12.82 4.11L14.75 3.44L16.69 6.79L15.14 8.14L15.14 9.86L16.69 11.21L14.75 14.56L12.82 13.89L11.32 14.75L10.94 16.76L7.06 16.76L6.68 14.75L5.18 13.89L3.25 14.56L1.31 11.21L2.86 9.86L2.86 8.14L1.31 6.79L3.25 3.44L5.18 4.11L6.68 3.25z" fill="none" stroke="#222" stroke-width="1.300" stroke-linejoin="round"/><circle cx="9" cy="9" r="3.100" fill="none" stroke="#222" stroke-width="1.300"/></svg>
<div class="a" style="left:1026px;top:769px;width:217px;height:6px;background:#f0f0f0"></div>
<div class="a" style="left:1059px;top:774px;width:1px;height:1px;background:#777"></div>
<div class="a" style="left:1243px;top:65px;width:8px;height:710px;background:#f1f1f1"></div>
<div class="a" style="left:1243px;top:65px;width:8px;height:583px;background:#c1c1c1;border-radius:4px"></div>
<div class="a" style="left:1251px;top:65px;width:7px;height:710px;background:#f0f0f0;border-left:1px solid #d6d6d6"></div>
<div class="a" style="left:1252px;top:235px;width:6px;height:77px;background:#fff"></div>
<div class="a" style="left:1252px;top:97px;width:6px;height:1px;background:#d0d0d0"></div>
<div class="a" style="left:1252px;top:169px;width:6px;height:1px;background:#d0d0d0"></div>
<div class="a" style="left:1252px;top:235px;width:6px;height:1px;background:#d0d0d0"></div>
<div class="a" style="left:1256px;top:122px;width:2px;height:12px;background:#f6d98a"></div>
<div class="a" style="left:1257px;top:144px;width:1px;height:1px;background:#e07b39"></div>
<div class="a" style="left:1257px;top:193px;width:1px;height:24px;background:repeating-linear-gradient(180deg,#e9a15b 0,#e9a15b 2px,#f0f0f0 2px,#f0f0f0 6px)"></div>
<div class="a" style="left:1257px;top:268px;width:1px;height:9px;background:#a58be6"></div>
<div class="a" style="left:1026px;top:775px;width:232px;height:42px;background:#f0f0f0;border-top:1px solid #d0d0d0"></div>
<div class="a" style="left:1026px;top:799px;width:232px;height:1px;background:#d0d0d0"></div>
<div class="t" style="left:1042px;top:781px;font-size:12px;color:#333">S</div>
<div class="t" style="left:1060px;top:781px;font-size:12px;color:#333">294%</div>
<div class="t" style="left:1161px;top:781px;font-size:12px;color:#333">G</div>
<div class="t" style="left:1180px;top:781px;font-size:12px;color:#333">5, 5mil</div>
<div class="t" style="left:1042px;top:805px;font-size:12px;color:#333">X</div>
<div class="t" style="left:1060px;top:805px;font-size:12px;color:#333">-1320mil</div>
<div class="t" style="left:1155px;top:805px;font-size:12px;color:#333">dX</div>
<div class="t" style="left:1180px;top:805px;font-size:12px;color:#333">-18785mil</div>
</body></html>
